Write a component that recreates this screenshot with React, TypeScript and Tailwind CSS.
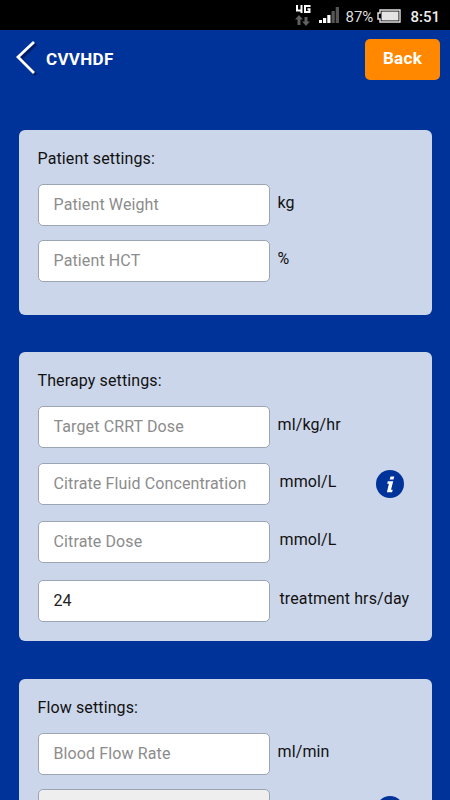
import { useState } from "react";

type Field = {
  name: string;
  unit: string;
  value?: string;
  info?: boolean;
  disabled?: boolean;
  rowClass: string;
  unitClass: string;
};

const patientFields: Field[] = [
  { name: "Patient Weight", unit: "kg", rowClass: "mb-[14px]", unitClass: "ml-2" },
  { name: "Patient HCT", unit: "%", rowClass: "", unitClass: "ml-2" },
];

const therapyFields: Field[] = [
  { name: "Target CRRT Dose", unit: "ml/kg/hr", rowClass: "mb-[15px]", unitClass: "ml-2" },
  { name: "Citrate Fluid Concentration", unit: "mmol/L", info: true, rowClass: "mb-4", unitClass: "ml-[10px]" },
  { name: "Citrate Dose", unit: "mmol/L", rowClass: "mb-[17px]", unitClass: "ml-[10px]" },
  { name: "Treatment Hours", unit: "treatment hrs/day", value: "24", rowClass: "", unitClass: "ml-[10px]" },
];

const flowFields: Field[] = [
  { name: "Blood Flow Rate", unit: "ml/min", rowClass: "mb-[14px]", unitClass: "ml-2" },
  { name: "", unit: "", info: true, disabled: true, rowClass: "", unitClass: "ml-2" },
];

function StatusBar() {
  return (
    <div className="flex h-[30px] shrink-0 items-center justify-end bg-black pr-[10px] tracking-normal text-white">
      <svg width="17" height="24" viewBox="0 0 17 24" className="mr-[8px]">
        <path d="M3 2v5.500h4.500M7.500 2v8M16.500 3H11v6h4.500V6.300h-2" fill="none" stroke="#fff" strokeWidth="2" />
        <path d="M5 12l4 4.500H6.500V22H3.500v-5.500H1zM12 23l4-4.500h-2.500V14h-3v4.500H8z" fill="#606060" />
      </svg>
      <svg width="20" height="16" viewBox="0 0 20 16" className="mr-[6px]">
        <path d="M0 13h3v3H0zM4 11h3.200v5H4zM8.300 8h3.200v8H8.300z" fill="#fff" />
        <path d="M12.500 4h3.300v12h-3.300zM16.700 0H20v16h-3.300z" fill="#555" />
      </svg>
      <span className="mt-[3px] w-[32px] text-[15px] leading-5 whitespace-nowrap text-[#dedede]">87%</span>
      <svg width="24" height="14" viewBox="0 0 24 14" className="mt-px mr-[9px]">
        <path d="M3 1h20v12H3v-3H1V4h2z" fill="none" stroke="#e4e4e4" strokeWidth="1.400" />
        <path d="M4.500 2.500h17v9h-17z" fill="#e4e4e4" />
      </svg>
      <span className="mt-[3px] text-[15px] leading-5 font-medium text-[#ededed]">8:51</span>
    </div>
  );
}

function Header() {
  return (
    <header className="flex h-[100px] shrink-0 items-start pt-[9px] pr-[10px] pl-4">
      <svg width="24" height="38" viewBox="0 0 24 38" fill="none" className="shrink-0">
        <path d="M20 5L5 19.500L20 36" stroke="#001b66" strokeWidth="3" />
        <path d="M18 3L2 18L18 34" stroke="#fff" strokeWidth="2.800" />
      </svg>
      <h1 className="mt-2 ml-[6px] text-[17px] leading-6 font-bold tracking-[0.3px] text-white">CVVHDF</h1>
      <button className="ml-auto h-[41px] w-[75px] rounded-[5px] bg-[#ff8800] pb-[2px] text-[17px] font-bold tracking-[0.3px] text-white">
        Back
      </button>
    </header>
  );
}

function InfoIcon() {
  return (
    <svg width="28" height="28" viewBox="0 0 28 28">
      <circle cx="14" cy="14" r="14" fill="#003399" />
      <path d="M14.500 6.500h3.800l-.8 3h-3.800zM11.800 11.300h5.400l-2.200 8.500h1.700l-.6 2.400h-5.200l2-8.500h-1.700z" fill="#fff" />
    </svg>
  );
}

function FieldRow({ field }: { field: Field }) {
  const [value, setValue] = useState(field.value ?? "");

  return (
    <div className={`flex h-[42px] ${field.rowClass}`}>
      <input
        aria-label={field.name}
        placeholder={field.name}
        value={value}
        disabled={field.disabled}
        onChange={(e) => setValue(e.target.value)}
        className="h-full w-[232px] shrink-0 rounded-[5px] border border-[#9ca5b3] bg-white px-[15px] pb-px text-[16px] tracking-[0.12px] text-[#222] placeholder:text-[#8c8c8c] disabled:bg-[#eeeeee]"
      />
      <span className={`mt-[7px] leading-6 whitespace-nowrap ${field.unitClass}`}>{field.unit}</span>
      {field.info && (
        <button aria-label="More information" className="mt-[7px] mr-7 ml-auto h-7">
          <InfoIcon />
        </button>
      )}
    </div>
  );
}

type PanelProps = {
  title: string;
  fields: Field[];
  className: string;
};

function Panel({ title, fields, className }: PanelProps) {
  return (
    <section className={`mx-[18.500px] shrink-0 rounded-[6px] bg-[#ccd6ea] pt-[17px] pl-[19px] ${className}`}>
      <h2 className="mb-[13px] leading-6">{title}</h2>
      {fields.map((field, i) => (
        <FieldRow key={i} field={field} />
      ))}
    </section>
  );
}

export default function App() {
  return (
    <div className="flex h-[800px] w-[450px] flex-col overflow-hidden bg-[#003399] font-['Roboto',sans-serif] text-[16px] tracking-[0.12px] text-[#111]">
      <StatusBar />
      <Header />
      <Panel title="Patient settings:" fields={patientFields} className="mb-[37px] h-[185px]" />
      <Panel title="Therapy settings:" fields={therapyFields} className="mb-[38px] h-[289px]" />
      <Panel title="Flow settings:" fields={flowFields} className="h-[185px]" />
    </div>
  );
}
